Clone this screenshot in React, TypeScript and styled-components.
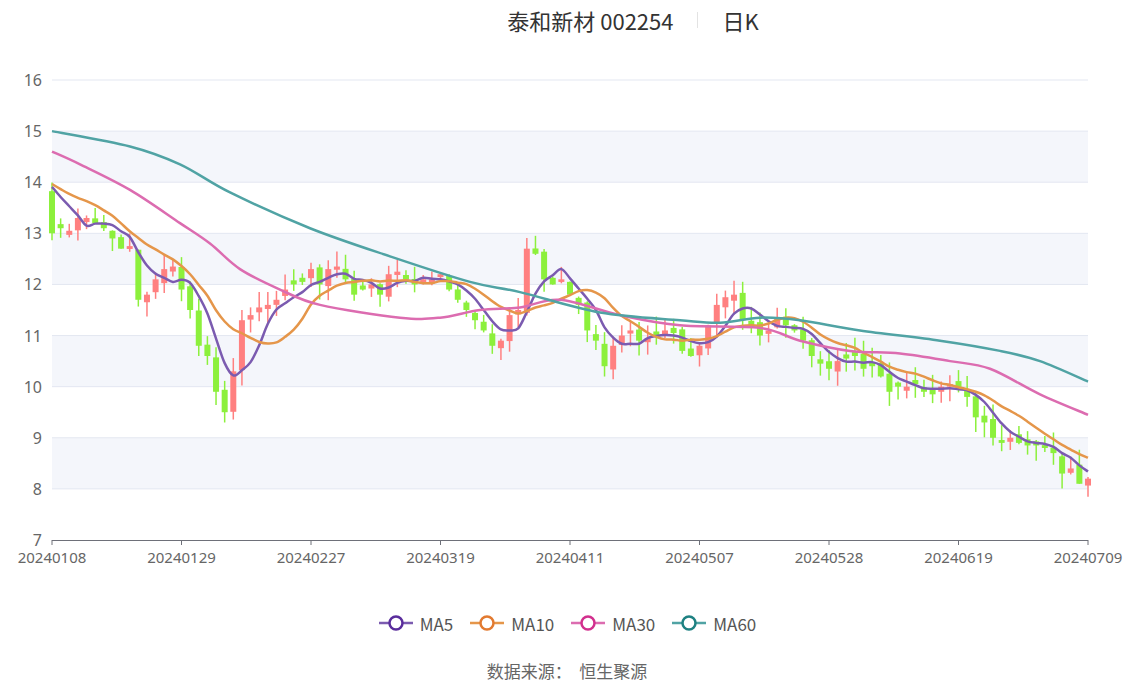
import React from 'react';
import styled, { createGlobalStyle } from 'styled-components';

const GlobalStyle = createGlobalStyle`
  html, body { margin: 0; padding: 0; background: #fff; }
  body { font-family: "Noto Sans CJK SC", "Noto Sans", sans-serif; }
`;

const Page = styled.div`
  width: 1134px;
  height: 689px;
  display: flex;
  flex-direction: column;
  overflow: hidden;
`;

const TitleRow = styled.div`
  height: 40px;
  display: flex;
  align-items: center;
  justify-content: center;
  padding-left: 132px;
  gap: 24px;
  font-size: 22px;
  color: #333;
`;

const Divider = styled.span`
  width: 1px;
  height: 16px;
  background: #e3e3e3;
`;

const ChartSvg = styled.svg`
  display: block;
  flex: none;
`;

const Legend = styled.div`
  height: 66px;
  display: flex;
  align-items: center;
  justify-content: center;
  gap: 16px;
  font-size: 17px;
  color: #555;
`;

const LegendItem = styled.div`
  display: flex;
  align-items: center;
  gap: 6px;
`;

const Source = styled.div`
  text-align: center;
  font-size: 17px;
  color: #666;
  margin-top: 2px;
`;

const X0 = 52;
const X1 = 1088;
const N = 121;
const xs = (i: number) => X0 + (i * (X1 - X0)) / (N - 1);
const ys = (v: number) => 540 - (v - 7) * (460 / 9);

const closes = [
  13.0, 13.1, 13.05, 13.3, 13.3, 13.2, 13.1, 12.9, 12.7, 12.75, 11.7, 11.8, 12.1, 12.3, 12.35, 11.9, 11.5, 10.8, 10.6, 9.9,
  9.5, 10.3, 11.3, 11.4, 11.55, 11.6, 11.7, 11.9, 12.0, 12.05, 12.3, 12.0, 12.3, 12.35, 12.1, 11.8, 11.9, 12.0, 11.8, 12.2,
  12.25, 12.1, 12.0, 12.1, 12.1, 12.2, 11.9, 11.7, 11.5, 11.3, 11.1, 10.8, 10.9, 11.4, 11.5, 12.7, 12.6, 12.1, 12.0, 12.1,
  11.8, 11.6, 11.1, 10.9, 10.4, 10.8, 11.0, 11.1, 10.9, 10.95, 11.0, 11.1, 11.05, 10.7, 10.6, 10.8, 11.2, 11.6, 11.75, 11.8,
  11.3, 11.2, 11.0, 11.1, 11.35, 11.2, 11.1, 10.9, 10.6, 10.45, 10.35, 10.5, 10.55, 10.6, 10.35, 10.4, 10.2, 9.9, 10.0, 10.0,
  10.05, 9.9, 9.85, 10.0, 10.05, 9.95, 9.8, 9.4, 9.3, 9.0, 8.9, 9.0, 8.9, 8.85, 8.85, 8.8, 8.7, 8.3, 8.4, 8.1, 8.2,
];

const prior = [14.1, 14.0, 14.05, 13.95, 14.0, 14.1, 13.95, 14.2, 14.3];
const all = [...prior, ...closes];
const ma = (n: number) =>
  closes.map((_, i) => {
    const k = i + prior.length;
    const s = all.slice(Math.max(0, k - n + 1), k + 1);
    return s.reduce((a, b) => a + b, 0) / s.length;
  });

const rnd = (i: number) => Math.abs(Math.sin(i * 12.9898) * 43758.5453) % 1;

const candles = closes.map((c, i) => {
  const prev = i === 0 ? 13.9 : closes[i - 1];
  let open = prev + (rnd(i) - 0.5) * 0.15;
  if (Math.abs(open - c) < 0.05) open = c + (rnd(i + 7) > 0.5 ? 0.08 : -0.08);
  const hi = Math.max(open, c) + rnd(i + 3) * 0.3;
  const lo = Math.min(open, c) - rnd(i + 5) * 0.3;
  return { open, close: c, hi, lo };
});

type P = [number, number];
const smooth = (pts: P[]) => {
  let d = `M${pts[0][0]},${pts[0][1]}`;
  for (let i = 0; i < pts.length - 1; i++) {
    const p0 = pts[i - 1] || pts[i];
    const p1 = pts[i];
    const p2 = pts[i + 1];
    const p3 = pts[i + 2] || p2;
    const c1: P = [p1[0] + (p2[0] - p0[0]) / 6, p1[1] + (p2[1] - p0[1]) / 6];
    const c2: P = [p2[0] - (p3[0] - p1[0]) / 6, p2[1] - (p3[1] - p1[1]) / 6];
    d += ` C${c1[0]},${c1[1]} ${c2[0]},${c2[1]} ${p2[0]},${p2[1]}`;
  }
  return d;
};

const ma30Keys: P[] = [
  [52, 14.6], [80, 14.35], [130, 13.85], [180, 13.2], [210, 12.8], [240, 12.3], [280, 11.9], [320, 11.6], [400, 11.35],
  [440, 11.35], [480, 11.5], [520, 11.55], [560, 11.7], [620, 11.4], [680, 11.2], [760, 11.15], [800, 10.9], [850, 10.7],
  [900, 10.65], [950, 10.5], [990, 10.35], [1040, 9.85], [1088, 9.45],
];
const ma60Keys: P[] = [
  [52, 15.0], [130, 14.7], [180, 14.35], [230, 13.8], [310, 13.1], [390, 12.55], [470, 12.05], [520, 11.85], [600, 11.45],
  [680, 11.3], [720, 11.25], [760, 11.35], [800, 11.3], [860, 11.1], [940, 10.9], [1000, 10.7], [1040, 10.5], [1088, 10.1],
];

const series = [
  { name: 'MA5', line: '#7b5bb0', mark: '#5a2d9c', d: smooth(ma(5).map((v, i) => [xs(i), ys(v)] as P)) },
  { name: 'MA10', line: '#e5964a', mark: '#e27a30', d: smooth(ma(10).map((v, i) => [xs(i), ys(v)] as P)) },
  { name: 'MA30', line: '#dc6cb0', mark: '#d2308e', d: smooth(ma30Keys.map(([x, v]) => [x, ys(v)] as P)) },
  { name: 'MA60', line: '#50a3a4', mark: '#1e8182', d: smooth(ma60Keys.map(([x, v]) => [x, ys(v)] as P)) },
];

const dates = ['20240108', '20240129', '20240227', '20240319', '20240411', '20240507', '20240528', '20240619', '20240709'];

const LegendIcon = ({ line, mark }: { line: string; mark: string }) => (
  <svg width="36" height="18" viewBox="0 0 36 18">
    <line x1="1" y1="9" x2="35" y2="9" stroke={line} strokeWidth="2.5" />
    <circle cx="18" cy="9" r="6.5" fill="#fff" stroke={mark} strokeWidth="2.5" />
  </svg>
);

export default function App() {
  const levels = [7, 8, 9, 10, 11, 12, 13, 14, 15, 16];
  return (
    <Page>
      <GlobalStyle />
      <TitleRow>
        <span>泰和新材 002254</span>
        <Divider />
        <span>日K</span>
      </TitleRow>
      <ChartSvg width="1134" height="550" viewBox="0 40 1134 550">
        {[15, 13, 11, 9].map((v) => (
          <rect key={v} x={X0} y={ys(v)} width={X1 - X0} height={ys(v - 1) - ys(v)} fill="#f4f6fb" />
        ))}
        {levels.slice(1).map((v) => (
          <line key={v} x1={X0} x2={X1} y1={ys(v)} y2={ys(v)} stroke="#e3e7f1" strokeWidth="1" />
        ))}
        {levels.map((v) => (
          <text key={v} x={42} y={ys(v) + 6} textAnchor="end" fontSize="16" fill="#666" fontFamily="Noto Sans, sans-serif">
            {v}
          </text>
        ))}
        <line x1={X0} x2={X1} y1={540.5} y2={540.5} stroke="#6e7079" strokeWidth="1" />
        {dates.map((d, k) => {
          const x = X0 + (k * (X1 - X0)) / 8;
          return (
            <g key={d}>
              <line x1={x} x2={x} y1={540} y2={545} stroke="#6e7079" />
              <text x={x} y={563} textAnchor="middle" fontSize="15" fill="#666" fontFamily="Noto Sans, sans-serif">
                {d}
              </text>
            </g>
          );
        })}
        {candles.map((c, i) => {
          const up = c.close >= c.open;
          const col = up ? '#ff8080' : '#8cf03c';
          const top = ys(Math.max(c.open, c.close));
          const bot = ys(Math.min(c.open, c.close));
          const x = xs(i);
          return (
            <g key={i}>
              <line x1={x} x2={x} y1={ys(c.hi)} y2={ys(c.lo)} stroke={col} strokeWidth="1.5" />
              <rect x={x - 3} y={top} width={6} height={Math.max(1.5, bot - top)} fill={col} />
            </g>
          );
        })}
        {series.map((s) => (
          <path key={s.name} d={s.d} fill="none" stroke={s.line} strokeWidth="2.5" />
        ))}
      </ChartSvg>
      <Legend>
        {series.map((s) => (
          <LegendItem key={s.name}>
            <LegendIcon line={s.line} mark={s.mark} />
            <span>{s.name}</span>
          </LegendItem>
        ))}
      </Legend>
      <Source>数据来源：&nbsp;&nbsp;恒生聚源</Source>
    </Page>
  );
}
